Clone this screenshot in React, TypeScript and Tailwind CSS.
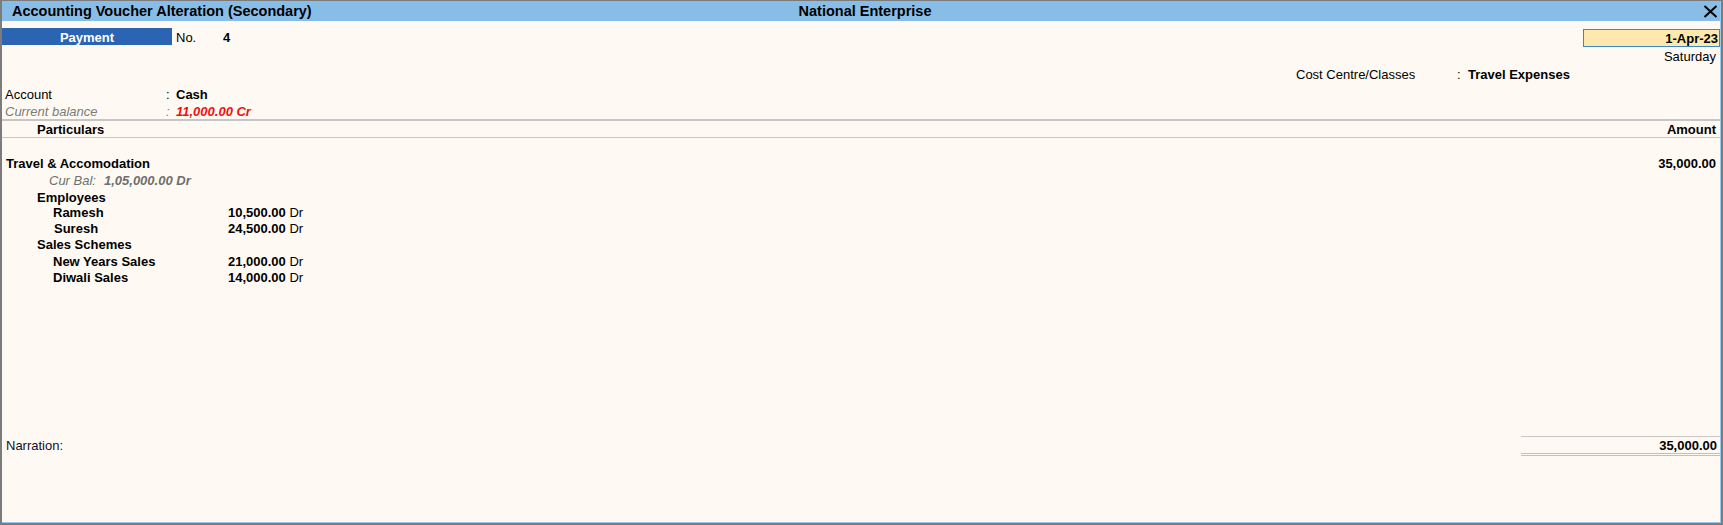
import React from 'react';

type LedgerLine = {
  name: string;
  indent: string;
  nameWidth?: string;
  amount?: string;
  height: string;
};

// cost centre allocation lines under the ledger
const costLines: LedgerLine[] = [
  { name: 'Employees', indent: 'pl-[35px]', height: 'h-[15px]' },
  { name: 'Ramesh', indent: 'pl-[51px]', nameWidth: 'w-[175px]', amount: '10,500.00', height: 'h-[16px]' },
  { name: 'Suresh', indent: 'pl-[52px]', nameWidth: 'w-[174px]', amount: '24,500.00', height: 'h-[16px]' },
  { name: 'Sales Schemes', indent: 'pl-[35px]', height: 'h-[17px]' },
  { name: 'New Years Sales', indent: 'pl-[51px]', nameWidth: 'w-[175px]', amount: '21,000.00', height: 'h-[16px]' },
  { name: 'Diwali Sales', indent: 'pl-[51px]', nameWidth: 'w-[175px]', amount: '14,000.00', height: 'h-[16px]' },
];

function CloseIcon() {
  return (
    <svg width="15" height="13" viewBox="0 0 15 13" className="block">
      <path d="M1.5 1 L13.5 12 M13.5 1 L1.5 12" stroke="#000" strokeWidth="2" />
    </svg>
  );
}

export default function App() {
  return (
    <div className="w-[1723px] h-[525px] bg-[#fefaf3] font-['Liberation_Sans',Arial,sans-serif] text-[13px] text-black border-l-2 border-t border-r-2 border-b-2 border-[#7c7c7c] overflow-hidden">
      <div className="h-full flex flex-col border-r border-b border-[#9ac6ea]">
        {/* title bar */}
        <div className="h-[20px] shrink-0 bg-[#88bde7] flex items-center text-[14.5px] font-bold leading-5">
          <div className="flex-1 pl-[10px]">Accounting Voucher Alteration (Secondary)</div>
          <div>National Enterprise</div>
          <div className="flex-1 flex justify-end pr-[2px]">
            <CloseIcon />
          </div>
        </div>

        {/* voucher type, number and date */}
        <div className="mt-[7px] flex justify-between h-[19px]">
          <div className="flex items-start">
            <div className="w-[170px] h-[17px] pt-[2px] bg-[#2b64b2] text-white font-bold flex items-center justify-center leading-4">
              Payment
            </div>
            <div className="h-[17px] pt-[2px] flex items-center leading-4 pl-[4px] w-[51px]">No.</div>
            <div className="h-[17px] pt-[2px] flex items-center leading-4 font-bold">4</div>
          </div>
          <div className="mt-[1px] w-[137px] h-[18px] pt-px bg-[#fde9ad] border border-[#3a88c9] flex items-center justify-end pr-[1px] font-bold leading-4">
            1-Apr-23
          </div>
        </div>
        <div className="h-[16px] leading-[20px] text-right pr-[4px]">Saturday</div>

        {/* cost centre */}
        <div className="mt-[3px] h-[16px] leading-[18px] flex pl-[1294px]">
          <span className="w-[161px]">Cost Centre/Classes</span>
          <span className="w-[11px]">:</span>
          <span className="font-bold">Travel Expenses</span>
        </div>

        {/* account */}
        <div className="mt-[4px] h-[17px] leading-[18px] flex pl-[3px]">
          <span className="w-[161px]">Account</span>
          <span className="w-[10px]">:</span>
          <span className="font-bold">Cash</span>
        </div>
        <div className="h-[16px] leading-[18px] flex pl-[3px] italic text-[#7a7a7a]">
          <span className="w-[161px]">Current balance</span>
          <span className="w-[10px]">:</span>
          <span className="font-bold text-[#f01010]">11,000.00 Cr</span>
        </div>

        {/* column headings */}
        <div className="border-t-2 border-b border-[#c6c6c6] h-[19px] flex justify-between items-start font-bold leading-[18px]">
          <span className="pl-[35px]">Particulars</span>
          <span className="pr-[4px]">Amount</span>
        </div>

        {/* entries */}
        <div className="mt-[17px] h-[17px] leading-[18px] flex justify-between font-bold">
          <span className="pl-[4px]">Travel &amp; Accomodation</span>
          <span className="pr-[4px]">35,000.00</span>
        </div>
        <div className="h-[17px] leading-[18px] flex pl-[47px] italic text-[#6e6e6e]">
          <span>Cur Bal:</span>
          <span className="ml-[8px] font-bold">1,05,000.00 Dr</span>
        </div>
        {costLines.map((line) => (
          <div key={line.name} className={`${line.height} leading-[18px] flex font-bold ${line.indent}`}>
            <span className={line.nameWidth}>{line.name}</span>
            {line.amount && (
              <span>
                {line.amount} <span className="font-normal">Dr</span>
              </span>
            )}
          </div>
        ))}

        <div className="flex-1" />

        {/* narration and total */}
        <div className="mb-[66px] flex justify-between items-start">
          <div className="pt-[2px] pl-[4px] h-[17px] leading-4 text-[#10102a]">Narration:</div>
          <div className="w-[199px] border-t border-[#c8c8c8]">
            <div className="h-[16px] leading-[18px] text-right pr-[3px] font-bold">35,000.00</div>
            <div className="border-b-[3px] border-double border-[#c0c0c0]" />
          </div>
        </div>
      </div>
    </div>
  );
}
